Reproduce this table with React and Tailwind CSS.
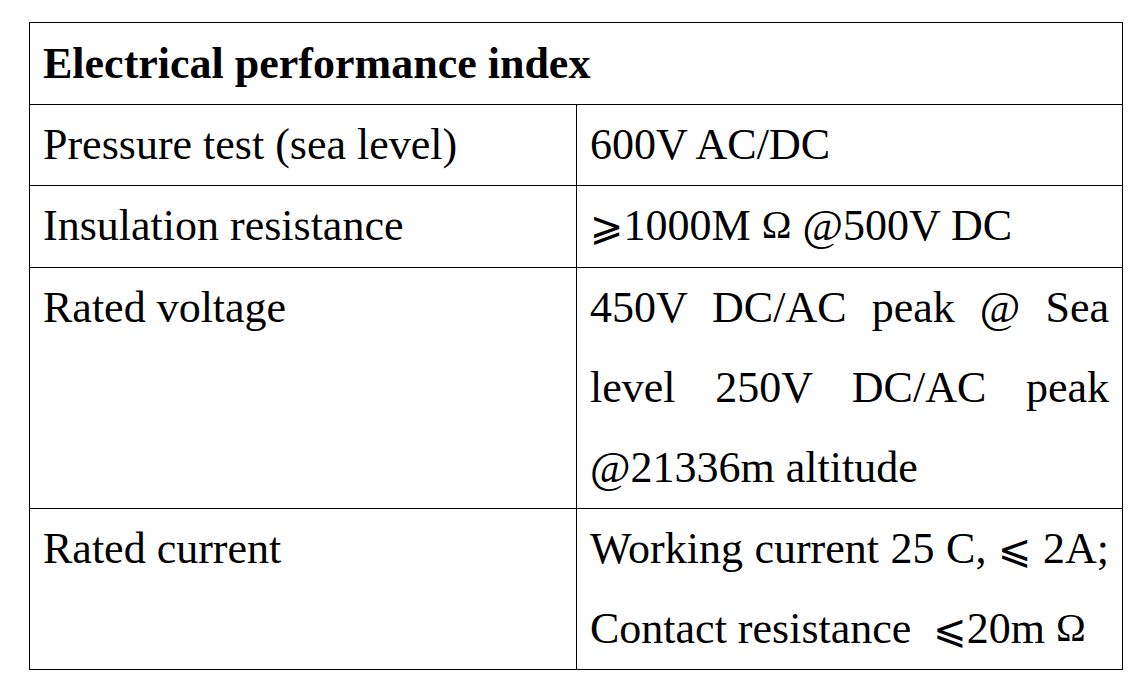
export default function App() {
  const serif = { fontFamily: '"Liberation Serif", "DejaVu Serif", serif' };
  const sym = 'font-["DejaVu_Sans",sans-serif] text-[40px] leading-[0]';
  const omega = 'font-["Liberation_Serif",serif] text-[40px] leading-[0] align-[2px]';
  const jl = 'block whitespace-nowrap text-justify [text-align-last:justify]';
  return (
    <div className="w-[1139px] h-[691px] bg-white" style={serif}>
      <div className="pt-[22px] pl-[29px]">
        <table className="border-collapse w-[1094px] text-black text-[44px] leading-[80px]">
          <tbody>
            <tr>
              <td colSpan={2} className="border border-black h-[82px] px-[13px] font-bold">Electrical performance index</td>
            </tr>
            <tr>
              <td className="border border-black w-[547px] h-[81px] px-[13px] align-top">Pressure test (sea level)</td>
              <td className="border border-black px-[13px] align-top">600V AC/DC</td>
            </tr>
            <tr>
              <td className="border border-black h-[82px] px-[13px] align-top">Insulation resistance</td>
              <td className="border border-black px-[13px] align-top whitespace-nowrap">
                <span className={sym}>⩾</span>1000M <span className={omega}>{'\u03A9'}</span> @500V DC
              </td>
            </tr>
            <tr>
              <td className="border border-black h-[239px] px-[13px] align-top">Rated voltage</td>
              <td className="border border-black px-[13px] align-top">
                <span className={jl}>450V DC/AC peak @ Sea</span>
                <span className={jl}>level 250V DC/AC peak</span>
                <span className="block">@21336m altitude</span>
              </td>
            </tr>
            <tr>
              <td className="border border-black h-[161px] px-[13px] align-top">Rated current</td>
              <td className="border border-black px-[13px] align-top">
                <span className={jl}>Working current 25 C, <span className={sym}>⩽</span> 2A;</span>
                <span className="block whitespace-nowrap">Contact resistance{'\u00A0 '}<span className={sym}>⩽</span>20m <span className={omega}>{'\u03A9'}</span></span>
              </td>
            </tr>
          </tbody>
        </table>
      </div>
    </div>
  );
}
